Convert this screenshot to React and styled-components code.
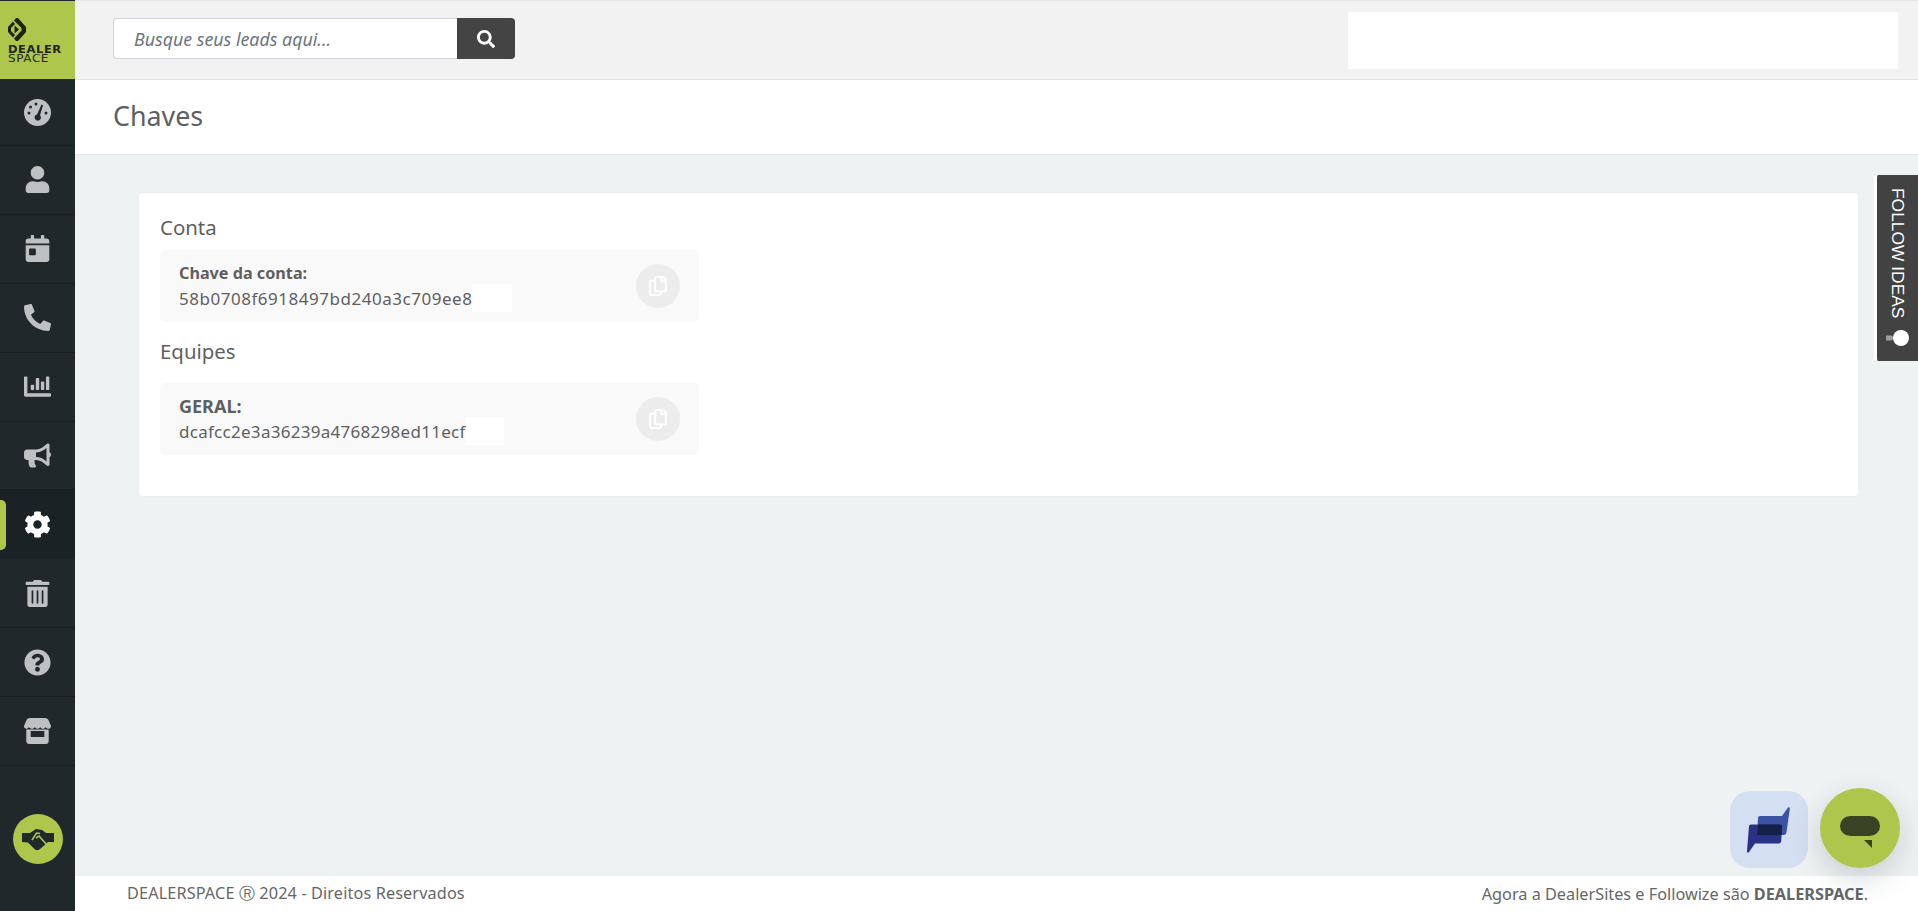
import React from 'react';
import styled, { createGlobalStyle } from 'styled-components';
import {
  FaUser, FaCalendarDay, FaPhoneAlt, FaChartBar, FaBullhorn, FaCog,
  FaTrashAlt, FaQuestionCircle, FaSearch, FaRegCopy,
} from 'react-icons/fa';

const GlobalStyle = createGlobalStyle`
  html, body { margin: 0; height: 100%; overflow: hidden; }
  body { font-family: "Noto Sans", "Open Sans", sans-serif; color: #5f5f5f; }
  * { box-sizing: border-box; }
`;

const Page = styled.div`
  position: relative;
  display: flex;
  width: 1918px;
  height: 911px;
  overflow: hidden;
  background: #eff2f3;
`;

const Sidebar = styled.aside`
  width: 75px;
  flex-shrink: 0;
  display: flex;
  flex-direction: column;
  background: #20282c;
`;

const LogoBox = styled.div`
  height: 78px;
  margin-top: 1px;
  display: flex;
  flex-direction: column;
  padding: 17px 0 0 8px;
  background: #aec64c;
  color: #1d2412;
`;

const LogoWord = styled.span`
  font-family: "DejaVu Sans", sans-serif;
  font-size: 10px;
  line-height: 9px;
  letter-spacing: 0.5px;
  font-weight: ${({ $thin }) => ($thin ? 400 : 700)};
  white-space: nowrap;
  transform: scaleX(${({ $thin }) => ($thin ? 1.2 : 1.15)});
  transform-origin: left center;
`;

const NavItem = styled.div`
  position: relative;
  height: ${({ $first }) => ($first ? '67px' : '68.9px')};
  flex-shrink: 0;
  display: flex;
  align-items: center;
  justify-content: center;
  border-bottom: 1px solid ${({ $active }) => ($active ? 'transparent' : '#181e21')};
  background: ${({ $active }) => ($active ? '#1b2226' : 'transparent')};
  color: ${({ $active }) => ($active ? '#fff' : '#bfc0c2')};
  font-size: 27px;
  svg { display: block; }
`;

const ActiveMark = styled.span`
  position: absolute;
  left: 0;
  top: 10px;
  width: 6px;
  height: 50px;
  border-radius: 0 5px 5px 0;
  background: #aec64c;
`;

const SideFoot = styled.div`
  flex: 1;
  display: flex;
  align-items: flex-start;
  justify-content: center;
  padding-top: 48px;
`;

const DealButton = styled.div`
  width: 50px;
  height: 50px;
  border-radius: 50%;
  display: flex;
  align-items: center;
  justify-content: center;
  background: #aec64c;
`;

const Main = styled.main`
  flex: 1;
  min-width: 0;
  display: flex;
  flex-direction: column;
`;

const TopBar = styled.header`
  height: 80px;
  display: flex;
  align-items: flex-start;
  justify-content: space-between;
  padding: 11px 20px 0 38px;
  background: #f2f2f2;
  border-top: 1px solid #e6e6e6;
  border-bottom: 1px solid #e2e3e4;
`;

const SearchForm = styled.div`
  display: flex;
  width: 402px;
  height: 41px;
  margin-top: 6px;
`;

const SearchInput = styled.div`
  flex: 1;
  display: flex;
  align-items: center;
  padding-left: 20px;
  background: #fff;
  border: 1px solid #ced4da;
  border-right: 0;
  border-radius: 4px 0 0 4px;
  color: #6c757d;
  font-size: 17.8px;
  font-style: italic;
`;

const SearchButton = styled.div`
  width: 58px;
  display: flex;
  align-items: center;
  justify-content: center;
  background: #444;
  border-radius: 0 4px 4px 0;
  color: #fff;
  font-size: 18px;
`;

const BlankPanel = styled.div`
  width: 550px;
  height: 57px;
  background: #fff;
`;

const TitleBar = styled.div`
  height: 75px;
  display: flex;
  align-items: center;
  padding: 0 0 3px 38px;
  background: #fff;
  border-bottom: 1px solid #e4e7e9;
`;

const PageTitle = styled.h1`
  margin: 0;
  font-size: 26.8px;
  font-weight: 400;
  color: #5f5f5f;
`;

const Content = styled.div`
  flex: 1;
  padding: 38px 60px 0 64px;
`;

const Card = styled.section`
  height: 303px;
  padding: 21px 21px 0;
  background: #fff;
  border-radius: 3px;
  box-shadow: 0 0 2px rgba(0, 0, 0, 0.06);
`;

const SectionTitle = styled.h2`
  margin: 0 0 ${({ $tight }) => ($tight ? '18px' : '9px')};
  font-size: 20.4px;
  line-height: 27px;
  font-weight: 400;
  color: #5f5f5f;
`;

const KeyBox = styled.div`
  width: 539px;
  height: 72px;
  margin-bottom: 16px;
  display: flex;
  align-items: center;
  justify-content: space-between;
  padding: 0 19px;
  background: #f9f9f9;
  border-radius: 5px;
`;

const KeyLabel = styled.div`
  font-size: ${({ $size }) => $size}px;
  line-height: 24px;
  font-weight: 700;
`;

const KeyValue = styled.div`
  display: flex;
  align-items: center;
  height: 26px;
  font-size: 17px;
  letter-spacing: ${({ $track }) => $track}px;
`;

const Patch = styled.span`
  width: ${({ $w }) => $w}px;
  height: 28px;
  background: #fff;
`;

const CopyButton = styled.div`
  width: 44px;
  height: 44px;
  border-radius: 50%;
  display: flex;
  align-items: center;
  justify-content: center;
  background: #ececec;
  color: #fff;
  font-size: 20px;
`;

const Footer = styled.footer`
  height: 35px;
  display: flex;
  align-items: center;
  justify-content: space-between;
  padding: 0 50px 0 52px;
  background: #fff;
  font-size: 16.25px;
  color: #666;
`;

const Copyright = styled.span`
  letter-spacing: 0.12px;
`;

const FollowTab = styled.div`
  position: absolute;
  top: 175px;
  right: 0;
  width: 44px;
  height: 186px;
  display: flex;
  flex-direction: column;
  align-items: center;
  padding: 13px 0 0;
  gap: 12px;
  background: #424242;
  border-left: 3px solid #fff;
  border-radius: 4px 0 0 4px;
  color: #fff;
  font-family: "Liberation Sans", Arial, sans-serif;
  font-size: 17.4px;
`;

const FollowText = styled.span`
  writing-mode: vertical-rl;
  white-space: nowrap;
`;

const SquareBubble = styled.div`
  position: absolute;
  left: 1730px;
  top: 791px;
  width: 78px;
  height: 77px;
  display: flex;
  align-items: center;
  justify-content: center;
  border-radius: 20px;
  background: #d5dff2;
`;

const ChatBubble = styled.div`
  position: absolute;
  left: 1820px;
  top: 788px;
  width: 80px;
  height: 80px;
  display: flex;
  justify-content: center;
  padding-top: 28px;
  border-radius: 50%;
  background: #aec64c;
  box-shadow: 0 10px 30px rgba(40, 60, 70, 0.2);
`;

const GaugeIcon = () => (
  <svg width="27" height="27" viewBox="0 0 27 27">
    <circle cx="13.5" cy="13.5" r="13.5" fill="currentColor" />
    <g fill="#20282c">
      <circle cx="12" cy="5" r="1.5" />
      <circle cx="6.5" cy="8" r="1.5" />
      <circle cx="5" cy="14" r="1.5" />
      <circle cx="22" cy="14" r="1.5" />
      <path d="M17.500 5.500 19 6.200l-3 10a3.200 3.200 0 1 1-3-.8z" />
    </g>
  </svg>
);

const ShopIcon = () => (
  <svg width="27" height="26" viewBox="0 0 27 26">
    <path d="M6 0h15c2 0 3 1 3.800 2.800L27 8c0 1.700-1 2.800-2.500 2.800-1.200 0-2.200-.7-2.700-1.800-.5 1.100-1.500 1.800-2.800 1.800s-2.400-.7-2.800-1.800c-.5 1.100-1.500 1.800-2.700 1.800s-2.300-.7-2.700-1.800c-.5 1.100-1.500 1.800-2.800 1.800S5.600 10.100 5 9c-.5 1.100-1.400 1.800-2.500 1.800C1 10.800 0 9.700 0 8l2.200-5.200C3 1 4 0 6 0z" fill="currentColor" />
    <path d="M2.300 11.500h22.400V23a3 3 0 0 1-3 3H5.300a3 3 0 0 1-3-3z M6.700 13v6h13.600v-6z" fill="currentColor" fillRule="evenodd" />
  </svg>
);

const navIcons = [GaugeIcon, FaUser, FaCalendarDay, FaPhoneAlt, FaChartBar, FaBullhorn, FaCog, FaTrashAlt, FaQuestionCircle, ShopIcon];

const LogoMark = () => (
  <svg width="18" height="23" viewBox="0 0 18 23" style={{ marginBottom: 4 }}>
    <path d="M8 0h2l8 9v5l-8 9H8l-2-2.500 7.500-8v-2.500L6 2.500z" fill="#1d2412" />
    <path d="M5 3.500 7 6 3 10v3l4 4-2 2.500L0 14V9z" fill="#1d2412" />
    <path d="M6.500 7.500 11 11.500l-4.500 4z" fill="#1d2412" />
  </svg>
);

const HandshakeIcon = () => (
  <svg width="32" height="21" viewBox="0 0 32 21">
    <path d="M0 4h8l6-4 6 1 4 3h8v9h-6l-8 7-1.500 1h-3l-7.500-7.500L0 13z" fill="#20282c" />
    <path d="M10 11 14.500 4 18 4.500M14 9l3-2 8 9" stroke="#aec64c" strokeWidth="1.600" fill="none" />
  </svg>
);

const BulbIcon = () => (
  <svg width="23" height="16" viewBox="0 0 23 16">
    <circle cx="15" cy="8" r="8" fill="#fff" />
    <path d="M0 5.500h5l2 1v3l-2 1H0z" fill="#9aa0a0" />
  </svg>
);

const ChatMark = () => (
  <svg width="44" height="46" viewBox="0 0 44 46">
    <path d="M13 9h22l6-8.500c1-.8 2 0 1.800 1.500L39.500 25c-.2 2-1 3-3 3H10l1-17c.1-1.200 .8-2 2-2z" fill="#3a53a4" />
    <path d="M4 17.500h29c1.500 0 2.300 1 2.200 2.500l-1 14c-.1 1.500-1 2.500-2.500 2.500H8L2 45c-1 1-2.200 .6-2-1L2 19.500c.1-1.200 .8-2 2-2z" fill="#2a3285" />
    <path d="M11 17.500h22c1.500 0 2.300 1 2.200 2.500l-.6 8H10z" fill="#15204a" />
  </svg>
);

const SpeechMark = () => (
  <svg width="40" height="32" viewBox="0 0 40 32">
    <rect x="0" y="0" width="40" height="20" rx="10" fill="#3a4224" />
    <path d="M24 24h8v8z" fill="#3a4224" />
  </svg>
);

const App = () => (
  <Page>
    <GlobalStyle />
    <Sidebar>
      <LogoBox>
        <LogoMark />
        <LogoWord>DEALER</LogoWord>
        <LogoWord $thin>SPACE</LogoWord>
      </LogoBox>
      {navIcons.map((Icon, i) => (
        <NavItem key={i} $first={i === 0} $active={i === 6}>
          {i === 6 && <ActiveMark />}
          <Icon />
        </NavItem>
      ))}
      <SideFoot>
        <DealButton><HandshakeIcon /></DealButton>
      </SideFoot>
    </Sidebar>
    <Main>
      <TopBar>
        <SearchForm>
          <SearchInput>Busque seus leads aqui...</SearchInput>
          <SearchButton><FaSearch /></SearchButton>
        </SearchForm>
        <BlankPanel />
      </TopBar>
      <TitleBar><PageTitle>Chaves</PageTitle></TitleBar>
      <Content>
        <Card>
          <SectionTitle>Conta</SectionTitle>
          <KeyBox>
            <div>
              <KeyLabel $size={16.2}>Chave da conta:</KeyLabel>
              <KeyValue $track={0.52}>58b0708f6918497bd240a3c709ee8<Patch $w={40} /></KeyValue>
            </div>
            <CopyButton><FaRegCopy /></CopyButton>
          </KeyBox>
          <SectionTitle $tight>Equipes</SectionTitle>
          <KeyBox>
            <div>
              <KeyLabel $size={18}>GERAL:</KeyLabel>
              <KeyValue $track={0.28}>dcafcc2e3a36239a4768298ed11ecf<Patch $w={38} /></KeyValue>
            </div>
            <CopyButton><FaRegCopy /></CopyButton>
          </KeyBox>
        </Card>
      </Content>
      <Footer>
        <Copyright>DEALERSPACE Ⓡ 2024 - Direitos Reservados</Copyright>
        <span>Agora a DealerSites e Followize são <b>DEALERSPACE</b>.</span>
      </Footer>
    </Main>
    <FollowTab>
      <FollowText>FOLLOW IDEAS</FollowText>
      <BulbIcon />
    </FollowTab>
    <SquareBubble><ChatMark /></SquareBubble>
    <ChatBubble><SpeechMark /></ChatBubble>
  </Page>
);

export default App;
